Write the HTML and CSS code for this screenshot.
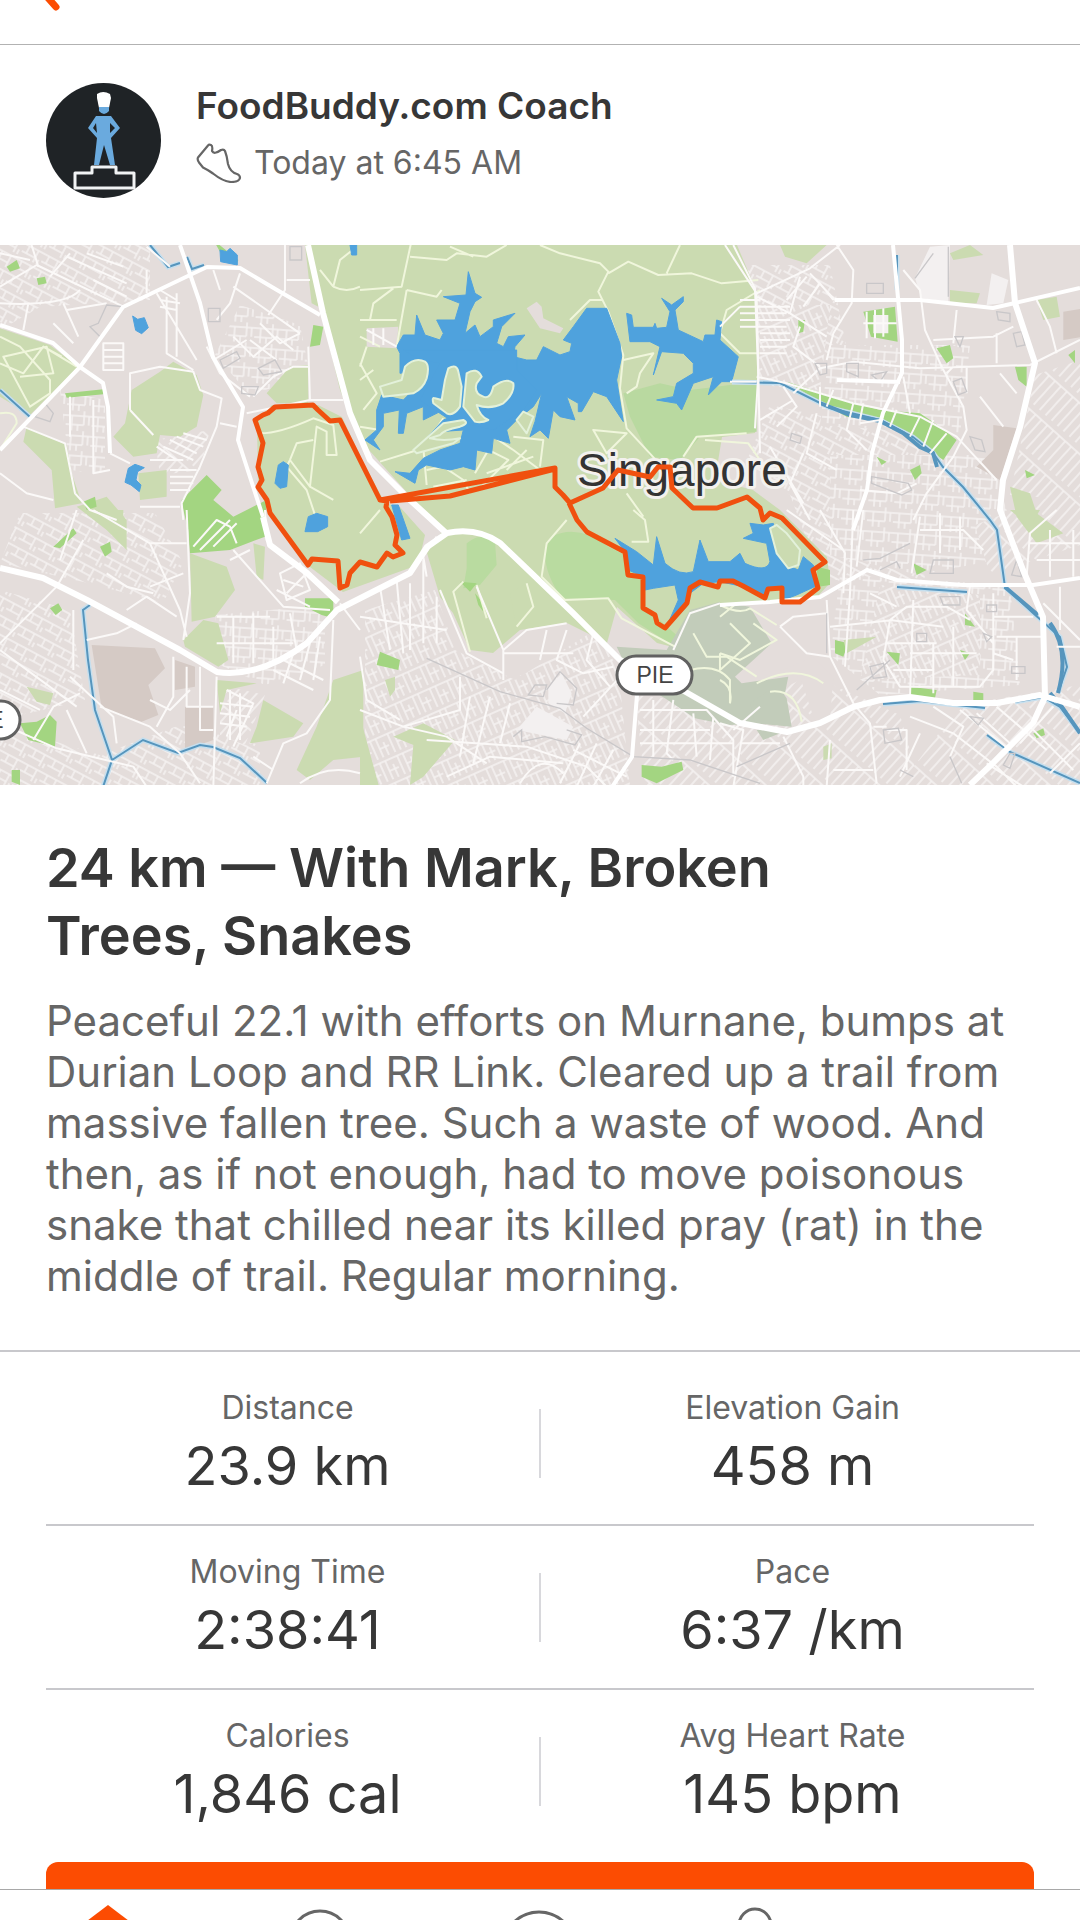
FILE: index.html
```html
<!DOCTYPE html>
<html lang="en">
<head>
<meta charset="utf-8">
<meta name="viewport" content="width=device-width, initial-scale=1">
<title>Activity</title>
<link rel="stylesheet" href="styles.css">
</head>
<body>
<div class="app">
  <header class="topbar">
    <button class="back" type="button" aria-label="Back">
      <svg width="32" height="44" viewBox="0 0 32 44"><path d="M23-20 5-10 20 7" class="back-line"/></svg>
    </button>
  </header>

  <main class="content">
    <section class="author">
      <svg class="avatar" viewBox="0 0 115 115" role="img" aria-label="FoodBuddy.com Coach">
        <circle cx="57.500" cy="57.500" r="57.500" fill="#1f2326"/>
        <path d="M51 11q6-4 13 0l1 4-2 10H53l-2-10z" fill="#fff"/>
        <path d="M53 24h10v4q-5 6-10 0z" fill="#6aaade"/>
        <path d="M50 33h15l9 12-9 10 4 27h-5l-6-20-5 20h-5l3-27-9-10zM50 40l-3 5 4 5zm14 0v10l5-5z" fill="#6aaade" fill-rule="evenodd"/>
        <path d="M29 90h17v-6h24v6h18v15H29z" fill="none" stroke="#f1f3f4" stroke-width="3" stroke-linejoin="round"/>
      </svg>
      <div class="author-text">
        <h2 class="name">FoodBuddy.com Coach</h2>
        <p class="when">
          <svg class="shoe" width="46" height="40" viewBox="0 0 46 40" aria-hidden="true"><path d="M12 2.500 2 14.500q-1 2 1 5l4 5q6 3 10 6 10 8 18 8.500 8 0 9-4 0-3-3-4-7-2-9-10-1-8-3-13-1-2-4-1-7 5-9 1 1-5-1-6-2-1-3 .5z" fill="none" stroke="#666" stroke-width="2.200" stroke-linejoin="round"/></svg>
          <span>Today at 6:45 AM</span>
        </p>
      </div>
    </section>

    <svg class="map" viewBox="0 0 1080 540" preserveAspectRatio="xMidYMid slice" role="img" aria-label="Route map">
      <defs>
        <pattern id="streets-a" width="22" height="17" patternUnits="userSpaceOnUse" patternTransform="rotate(28)"><path class="ground" d="M0 0h22v17H0z"/><path class="street" d="M0 4h22M0 12h15M5 4v8M15 4v13M19 12v5"/></pattern>
        <pattern id="streets-b" width="19" height="24" patternUnits="userSpaceOnUse" patternTransform="rotate(-24)"><path class="ground" d="M0 0h19v24H0z"/><path class="street" d="M0 4h19M3 4v20M9 4v20M15 10v14M9 15h10"/></pattern>
        <pattern id="streets-c" width="26" height="20" patternUnits="userSpaceOnUse" patternTransform="rotate(4)"><path class="ground" d="M0 0h26v20H0z"/><path class="street" d="M0 5h26M0 14h18M6 5v15M18 0v14M12 14v6M23 5v9"/></pattern>
        <pattern id="streets-d" width="8" height="38" patternUnits="userSpaceOnUse" patternTransform="rotate(42)"><path class="ground" d="M0 0h8v38H0z"/><path class="street" d="M3 3v32M0 3h8"/></pattern>
      </defs>
      <path class="ground" d="M0 0h1080v540H0z"/>

      <!-- street texture of the built-up districts -->
      <path fill="url(#streets-a)" d="M0 0h150v55L40 62 0 85zM20 268h135l28 50-20 40-75-20-88-20zM0 345l70 20 15 90-85 20zM0 480l100 30 80-30 80 20v40H0zM770 160l140 30 30 50-20 120-100-30-30-80-45-30zM740 20h90l20 100-80-20z"/>
      <path fill="url(#streets-c)" d="M240 60l60 20 10 50-60 20-35-40zM215 370l110-10v60l-60 20-45-20zM60 145l45 10v75l-35-5zM840 330l170 10 10 100-140 10-50-40zM830 100h140l-10 90-140-10zM830 210h160l30 100-100 20-90-20z"/>
      <path fill="url(#streets-b)" d="M365 365l70-20 20 60 60 30 80-50 30 50-30 60v50H365zM755 60l75 0-10 85-62-5zM880 340l100 10v80l-120 5zM370 460l60-20 90 50v50H380zM520 430l100 10 10 100H500z"/>
      <path fill="url(#streets-d)" d="M1035 130l45-15v140l-70-5zM960 460l120-20v100H900zM155 195l55-10-10 40-40 5zM220 440l45 10-20 50-25-10zM730 470l80-40 90 40 20 70H720zM975 280l105-40v60l-90 30zM635 450l90 10 10 80h-90z"/>

      <!-- industrial and military land -->
      <g transform="translate(0 265) scale(.3333)"><path fill="#d5cac5" d="M275 405l190 10 30 60-50 50 30 90-50 20-120-40zM555 590h85v100l-85 30zM525 450l60 20v60l-60 10z"/></g>
      <g transform="translate(720 -5) scale(.3333)"><path fill="#d5cac5" d="M820 555l70 10-50 155-70-40 50-50zM1030 215l60-10v85l-60 10z"/></g>

      <!-- woodland and parks -->
      <path class="wood" d="M310 0H737L758 50V135L755 188 722 192 715 235 753 245 780 265 827 312 830 338 817 352 720 358 693 368 673 402 657 398 617 362 607 398 567 378 520 385 493 408 470 405 453 368 440 352 427 308 443 285 420 262 360 195 340 145 328 95z"/>
      <path class="wood" d="M257 175 272 160H318L342 172 362 215 385 258 400 262 425 290 418 320 343 347 310 322 268 265 258 242z"/>
      <g transform="translate(0 -5) scale(.3333)">
        <path class="wood" d="M0 265l150 50 85 65-115 115-30 30-90-55zM80 560l120 55 15 85 30 90-80 15-10-115-85-85zM395 450l85-55 40-30 70 40 20 60-20 95-50 30-60-5-10 55-70 10-60-60 35-40zM415 700l85-10v80l-80 10zM800 460l70-80 55-5v115h-95zM915 15h20l20 185-20-10zM230 800l90-30 60 70v90l-60-60z"/>
        <path class="park" d="M20 80l30-20 10 25-30 10zM110 115l25-5 5 20-25 5zM195 460l115-12v15l-110 10zM640 0l75 60-5 15-50-40zM940 255l30 5-10 55-30 5zM250 785l35-15 5 30-30 10z"/>
      </g>
      <g transform="translate(360 -5) scale(.3333)">
        <path fill="#b9d9a0" d="M790 460l110-30 90 20 120-15h80v140l-170 15-60 70-90-10-60-120z"/>
        <path class="ground" d="M20 265l95-5-5 65-90-5zM500 205l30-20 15 15 5 35 60 30-10 15-60-15z"/>
      </g>
      <g transform="translate(720 -5) scale(.3333)">
        <path class="wood" d="M180 15h140l-60 55-65-20zM950 180l60-10 10 60-50 10zM690 150l90 10-10 30h-80zM690 40l60-25 40 30-90 15zM870 740l60 20 20 60 80 60-80 30-60-80z"/>
        <path class="park" d="M200 425l140 45 140 40 120 10 60 40 50 40-40 60-30-20-60-50-100-50-100-10-90-50zM430 215l95-15 8 105-80-15zM235 240h20l-5 35-15 5zM650 325l40-10 10 40-20 15zM885 380h35v60l-25-20zM1045 345l20-15v40zM570 690l30-15 5 25-20 20zM915 690l30 15-25 10zM470 650l30 15-15 10z"/>
        <path class="plaza" d="M630 20l60-5-5 170-80-10-20-60zM815 100l50 20-15 70-50 5zM460 225h45v55h-45z"/>
      </g>
      <g transform="translate(0 265) scale(.3333)">
        <path class="park" d="M550 0l-5-30 75-75 45 45-25 30 60 50 100-50-5 110-105 40-120 10-5-70zM60 640l50-5 40-20 20 20-5 75-80-20zM300 110l30-15 5 30-20 15zM150 295l25-15 12 20-20 15zM915 265h85v60l-35-10-50-25zM160 110l60-55 10 15-50 45zM35 780h25v45l-25-10z"/>
        <path class="wood" d="M570 130l110 40 25 70-60 80-70 15zM550 390l60-60 45 10 30 110-30 20-100-60zM790 570l120 70-30 40-130 20 20-50zM1000 510l90-30v260l-90 10-70 60-40-30 60-130zM650 510l120 10-90 20-20 70zM290 0h80v40l-20 30zM80 530l80 20-10 35-40-10zM760 100l35 10-5 100-20-10z"/>
      </g>
      <g transform="translate(360 265) scale(.3333)">
        <path fill="#b9dba0" d="M575 80q80-40 170 30l40 20 60 65 10 95 100 90-10 30-110-70-70-70-160-5q-80-120-30-185zM320 100q50-40 85-5l5 70-50 60-50 10 10-60z"/>
        <path class="wood" d="M100 680l90-40 95 50-95 110-40 25 10-120zM0 620l60 220H0zM75 510l30-10v40l-15 20zM450 250l50-30 20 80-50 60z"/>
        <path class="park" d="M60 425l60 25-5 30-65-15zM345 250l25 30v25l-15-20zM300 215l50 5-20 25zM845 765l60 5 60-15 5 25-80 40-45-20z"/>
        <path class="plaza" d="M530 590l110 60-20 40-150-30zM565 530l40-40 30 60-20 60-50-30z"/>
        <path class="cemetery" d="M770 410l150 10 70-120 90-25 90 15 65 110-110 100 20 20 140-20-10 50-50 10v80l-120 5-100-20-90-60-100-60z"/>
      </g>
      <g transform="translate(720 265) scale(.3333)">
        <path class="ground" d="M120 510l160-70 60 60-10 130-40 20-50-150-110-20z"/>
        <path class="cemetery" d="M140 545q40-20 60 20l15 85-110-10-15-60zM110 660l60-5 10 15-50 20z"/>
        <path class="park" d="M290 170l40 10v45l-35 5zM580 160l40 20-30 15zM735 310l30 40-30-5zM500 425l40 5-5 35zM720 420l30 10-15 20zM570 530l80 10-5 25-75-5zM760 545l30 5v25h-30zM940 670l30-15 5 20-25 10zM345 390l40 10-15 40-25-10z"/>
        <path class="wood" d="M870 0h90l-30 50zM370 390l100-10-90 50zM310 710l25-10v45l-25 5zM0 230l130 40 170-20-60 30H0z"/>
      </g>

      <!-- trails inside the woods -->
      <g class="trail" transform="translate(0 -5) scale(.3333)"><path d="M0 290l60 30 90 100 0 40-60 40-80-150 130-30 20 80-100 10M0 370l70 30 60-80 100 60M130 320l55 30M0 520q50-10 50 30L0 630M780 580q60 0 160-45l60 20 10 90h-30v-70l-30-15-20 180M870 660l20-50 50-10M870 660l60 80 70 40M870 660l-10 20 60 70 30 90M1000 140l20-80 50-40M1000 140q40 20 80 0M960 90l40 50"/></g>
      <g class="trail" transform="translate(360 -5) scale(.3333)"><path d="M155 0l-30 140-125 10M150 50l110 10 30-20 90 10 60-35M270 20l70 30M140 150l90 20 15-20M30 240l10-50 60-45M140 150l-30 170M0 240h110M540 15l60 25 120 30 25 25-30 60 30 60 45 130-10 100 20 120 120 130M745 100l60-35 90 40 100-5 90 30 110-10M920 100l40-85M790 360l90-20-40 60-10 40-30 20M1200 150l-100 60-20 70 60 60h60M630 240l60-60h40M0 370l50 90-40 50M60 665l130-40 10 110M190 625l60-90M400 590l60 40 80 60M345 700l40-70 60 30-80 80M460 590l90 10-10 80M440 690l60-60M700 570l100 10-60 60zM970 650l40-60 150-10M1035 600l130 10 35 50M800 760l50 70M0 290l60 30M20 320l-20 60M0 420l40-30M0 560l60 10M200 690l50-10 60 40 20 40M380 700l140-50M220 740l100-20"/></g>
      <g class="trail" transform="translate(360 265) scale(.3333)"><path d="M620 30l-60 70-15 100 70 70 130-5 40 60 160 85M820 0l35 30 10 65h-50M0 70l60-70M500 220l20 70-50 60M310 215l-30 30 50 180M350 225l30 100M1000 370l40 70 60 0 90 60M990 480q80-20 120 30v70M1080 430l0 50 90-80-60-60"/></g>
      <g class="trail" transform="translate(720 265) scale(.3333)"><path d="M0 285q60 30 90 10l80 50M0 430l60 20 110-60-70-50M0 510q40 20 30 70M110 520q120-60 200 0M150 545q80-10 95 90M0 320l50-40"/></g>

      <!-- reservoirs, lakes and canals -->
      <g class="water" transform="translate(360 -5) scale(.3333)">
        <path d="M110 320L130 285 165 285 170 225 195 285 240 300 250 280 230 240 285 240 300 190 250 170 318 165 325 95 345 160 365 172 345 185 330 215 315 280 345 255 360 290 400 260 400 240 465 220 425 260 410 310 430 320 445 290 495 285 465 320 460 350 500 360 530 360 550 320 600 345 630 335 635 310 610 300 640 260 680 205 740 205 780 310 785 350 770 420 790 545 740 470 700 455 665 515 655 515 655 490 620 470 645 540 600 530 580 510 565 595 540 570 510 590 525 545 545 460 520 500 470 540 440 570 450 610 400 595 395 640 350 630 345 690 310 680 270 690 200 675 175 690 165 730 105 695 150 700 190 655 240 630 300 610 310 570 240 575 195 600 250 540 300 520 260 505 190 540 190 500 140 520 130 580 115 580 118 510 70 520 70 560 40 600 60 630 15 600 50 570 50 510 65 465 130 480 180 430 200 385 120 400 120 340z"/>
        <path d="M800 220L815 225 820 262 880 262 885 250 890 265 920 262 930 215 905 175 935 195 970 170 970 185 945 210 955 270 1030 305 1035 285 1065 285 1070 240 1085 245 1080 300 1135 350 1115 425 1085 425 1045 465 1060 410 1000 430 965 510 950 490 890 480 940 470 950 430 1000 400 1000 370 970 340 905 335 880 405 900 320 870 305 810 305z"/>
        <path d="M95 795h20l35 100-25 5zM-30 15h20v30h-15z"/>
        <path d="M130 330h340v60l60 60-40 60-90 60-130-30-90-60 60-110-60-10z"/>
      </g>
      <g class="island" transform="translate(360 -5) scale(.3333)"><path d="M60 440l65-20 10-40q30-30 60-15 15 10 5 50-10 30-40 45l-90 10zM265 385q25-15 30 10l10 45-5 60q-20 30-40 20l-40-30q-5-20 5-15l20 5 10-60zM320 400q30-20 45 10l-15 20q-10 30 20 40 20 10 30-30 40-30 60-10 5 30-30 60-40 20-80 5 10 35 35 45-20 10-40 5l-35-45zM470 540l20-25 30 15-20 50zM160 630l90-80 60-10q20 10-10 20-50 10-60 25l-30 10q40 10 90 0l-20 15-110 30z"/></g>
      <path class="water" transform="translate(360 265) scale(.3333)" d="M765 85L830 125 880 165 890 80 915 160Q960 200 1000 185L1020 90 1045 155 1110 155 1140 130 1155 160Q1220 190 1230 155L1220 100 1150 85 1180 70 1170 40 1210 45 1240 40 1245 60 1260 130 1280 165 1315 180 1330 140 1360 165 1375 225 1310 255 1270 270 1265 235 1220 240 1210 265 1150 230 1080 215 1030 220 990 250 980 290 920 350 955 270 945 225 880 235 855 240 850 200 805 180 795 125z"/>
      <path class="island" transform="translate(720 265) scale(.3333)" d="M150 55l20-10 30 25 40 50-5 45-30 10-35-45z"/>
      <g class="water" transform="translate(0 -5) scale(.3333)"><path d="M398 228l15 10 20-5 12 30-20 18-18-10zM660 30l20 5 10-10 22 20v30l-50-10zM835 675l15-10 15 10-5 65-20 5-15-15zM385 685l20-12 28 10-20 12-5 25 15 15-5 20-25-20-18-8z"/></g>
      <path class="water" transform="translate(0 265) scale(.3333)" d="M915 65l10-45 25-10 33 10v30l-30 15z"/>
      <g class="canal-edge"><use href="#canals"/></g>
      <g class="canal"><g id="canals">
        <path d="M150 0L168 22 180 18M187 12L192 24 204 20M0 145L30 172M897 10v35M732 137L780 138 830 163 880 175 913 192 933 208 943 222 963 242 990 275 997 285 1005 342 1033 368 1060 392 1067 422 1058 448M883 459L920 456 985 463M1015 457L1043 452 1060 462 1080 488M897 342L967 347M987 490L1010 507 1080 538M90 360L83 365 88 415 95 465 112 515 103 542M112 515L143 495 178 508 200 500 213 502 240 513 267 538"/>
      </g></g>
      <path class="river" d="M820 158L850 170 880 176 903 188 920 202 933 208 937 222M1005 342L1038 370M1050 378Q1070 405 1058 448M1050 448L1062 462 1080 488"/>

      <!-- secondary streets -->
      <g class="road" transform="translate(0 -5) scale(.3333)"><path d="M0 140l110-65 260 125M90 0l25 80M0 190q200 10 240-40M190 190l45 100M70 270l15-80M200 210l120-20M855 15v135l-50 75M925 320l5 160-190 40M930 480h100M390 510V400l90-20 100 15 20 55 65 25-15 85-50 120-55 110 5 50M390 510l70 75M70 560l125 50 30 150 45 50 80 30M700 140l200 140M640 90l20 60M500 250v90l80 50M0 700l80 60 80 20M440 90v70M160 250l60 60M470 160l120 200M720 100l-30 90-40 50M860 120h70M640 360l100-60M760 470l60-60 60-30h45M620 320l40 80 90 70M330 640l60 30M210 470v120M280 480v220l50-10M450 660h100M660 550l50 10M420 800h120M310 310h60v80h-60zM310 330h60M310 350h60M310 370h60M480 150l50 30M480 180l60 10M480 200l50 10M500 170v80M530 160v190M490 620l90 40M510 600l80 40M530 590l80 30M550 580l70 20M510 690h80M510 710h70M510 730h70M510 750h60M470 620l60 40M700 290l60 60 70-60 50 40M750 300l80 60M780 250l60 60 60-30M440 20l70 60M260 40l110 40M200 50l180 80M150 110l60-70M280 120l100 50M0 40l90 20"/></g>
      <g class="road" transform="translate(360 -5) scale(.3333)"><path d="M1120 15l65 130 10 260-10 160M1110 425h80M20 270l90 50M40 265v50M70 265v50M1140 180h60M1140 200h60M1140 220h60M1140 240h60M1140 260h60"/></g>
      <g class="road" transform="translate(720 -5) scale(.3333)"><path d="M15 15l95 145 5 240 5 240M110 160l160-75 90-70M270 100l75 80M350 15l50 75-5 100-55 90-20 80M550 90l50 60 15 120 50 110 65 120 10 70-40 80-80 110-40 80M220 460l80-75 100-20 200 20 330-10 150-75M110 410l90 20 200 60 200 40 110 60 120 130M950 180l40 80 20 80M710 210l-10 100M640 300l180-10 60-30M830 280v90M290 520l-30 120 90 50M550 410l20 110M190 440l40 60-60 60M120 540l100-60M400 490l-20 80 60 60M480 540l-60 10M740 380v80M680 400l20-20M110 170l100 50 110 70M210 220l30-110M300 380l-80-60 20-60M0 260l60-60M840 400l50 60M780 470l70 90M420 750l110 10 60-30M250 640l-40 90 60 110M150 620l100 170M120 200h90M120 220h80M120 240h90M120 260h80M120 280h90M120 300h90M120 320h80M120 340h80M440 215v80M465 210v85M490 205v85M430 250h100M300 440v60M340 450l-20 50M430 490l-10 50M530 510l-20 50M600 530l-30 60M640 540l-30 80M680 580l-50 60M250 200l50-70 40 50M200 180l60-70"/></g>
      <g class="road" transform="translate(0 265) scale(.3333)"><path d="M795 0l5 90 120 100 90 80M1020 280l60 80M1000 330l-10 240-70 100-70 30-50 120M650 500l-10 330M560 0l10 250-20 140M700 120l150 170 140 10M280 0l170 100 90 200 20 80M0 400l170-170 80-140M0 640l170 75 230 55 40 60M520 440v120l-50 90M300 590l150 60 90 80 60 90M210 500l130 120 10 80M0 420l230 170M260 390l90-20 60-30M560 470v120h80M450 570l60 30 60-60M600 470v190h40M320 190l60 40 80 20M380 300l60-40 90 60M690 150l60-30M830 240l100 50M650 320h160M700 320v140M760 310v150M820 350v100M870 310l20 110M650 400h230M220 300v180M200 600l60 130M100 690l60-100 80-40M0 540l120 60M230 0l-50 150M450 100l110 0M450 230l100-40M680 540l80 40-60 130M710 600l-30 80M760 740l60 40M900 820q80-60 180-30M580 110l70-80 40 20 20 50M600 120l90-90M640 110l70-70M660 580l100 10M660 610l90 10M660 640l80 10M690 540v150M720 550v140M840 190l60-30 30 80-70 30zM850 210l60 20M860 250l60-60M820 480l120 60M850 450l120 60M880 430l-30 90M930 400l-30 110M960 380l-20 130"/></g>
      <g class="road" transform="translate(360 265) scale(.3333)"><path d="M190 150v250M200 200l-10-60 40-60M240 240l80 190 110 60M430 510v-90l70-60 120-20M350 230l80 190M0 600l130 50 170-50V500M130 650l130 30 120 80M0 440l20 130 100 60M940 420l50-110 90-30M60 230l30 190M110 210l20 220M150 220v200M230 260v140M0 320l260 40M430 430h210M560 360l-20 90M620 360l-30 90 80 40 90-20M700 370l-20 80 70 80M330 560l-30 180M390 560l-50 200M450 580l-30 120M200 690l300 20 180 60 60 60M260 800l130-60 220 20M480 820q60-100 130-30M660 700l-60 120M710 700l-60 130M760 720l-60 110M640 720l160 80M670 620l120-130 40 70M880 570v170M940 570l-20 160 20 20M840 600h200l80 90v110M1000 610l10 130M1060 620l-10 130M840 660h210M840 700h280M1200 590l-80 70"/></g>
      <g class="road" transform="translate(720 265) scale(.3333)"><path d="M320 270l10 170 70 140 50 60 20 180M400 0l-10 250-15 220M430 0l-20 170M300 0l75 130-5 120M600 20l-25 170M750 230l-10 70 80 100v80l-40 50H540l-50-80 20-120 50-40h120l70 40M580 270l-10 290M920 200l10-130 80-70M330 350l190-20M180 350l80 80 70 10M180 350l40-30 100-10M450 250l80 40M510 330l160 20M500 400h150M520 480h120M640 400v150M700 350v180M570 430h200M200 0l170 120M930 100h150M950 150h130M990 60v140M1060 60v140M600 60h130l60 60M660 10v120M720 20v100M820 250v180l60 20M820 320h120M830 380h140M890 380v130M970 280l110 110M1020 230v130M1010 410h70M570 620l130 50 130 100 60 60M640 590l90 60-40 90M720 600l150 120M830 590l150 130M500 660h60v120M460 650h40M0 640l70 20-30 170M60 700h120M190 680l60 120 0 30M330 690l-10 140M340 780h120M600 670l-60 130M1000 590l-100 110M1080 700l-90 90M930 650l130 130M800 760l110 70M870 700l-100-90"/></g>

      <!-- building outlines and the rail line -->
      <g class="block" transform="translate(0 -5) scale(.3333)"><path d="M320 195l45 5-60 95-35-35 25-10zM625 205h35v40h-35zM660 360l50-25 10 20-50 30zM775 385l50-25 20 35-55 10zM105 530l30-40 25 30-10 25zM725 440l50 0-10 25-40-5zM870 20h35v40h-35z"/></g>
      <g class="block" transform="translate(720 -5) scale(.3333)"><path d="M440 130h50v30h-50zM285 370h35v30l-20 5zM380 370h35v40l-35-15zM455 405l45-10-20 30zM700 425l25-10 15 40-25 10zM705 290h25l-10 30zM880 280l25-5 10 40-25 5zM750 590l35 10 10 35-30-5zM215 580l30 10-5 20-30-10zM455 710l110 20 10 20-30 15-90-35zM830 215l40 5v25l-35-5zM585 115l55-75M685 20v150"/></g>
      <g class="block" transform="translate(360 265) scale(.3333)"><path d="M460 680l25-20 0 35 70-15 90 25 20-30-45-15M525 525h35l-10 35-45-5zM560 540l40-55 50 50-10 50-50-5M200 445L420 545l180 50 80 60 140 85 170 10 210 70"/></g>
      <g class="block" transform="translate(720 265) scale(.3333)"><path d="M490 660l45-5 10 35-50 10zM450 470l40-10 10 40-40 5zM590 370h30v25h-30zM800 285h30v20h-30zM790 370l25 10-15 15zM875 470h40v20h-40zM750 620l40 5-15 20zM410 540l100-90M430 150l50-5 90-45M480 180l50-25 10 20M640 150h60v40h-70zM870 730h15l-15 45-20-10zM320 310v120M890 150l15 50-30-5zM690 740l35 80M540 780l40 20M50 770l160-70M660 260h60v25h-50z"/></g>

      <!-- main roads and expressways -->
      <g class="avenue">
        <path d="M0 205L80 122 123 62 190 30 207 22 240 23 277 45 320 70M0 80L53 98 80 122 103 138 108 162 110 208M180 0L200 58 213 112 243 162 238 195 263 272"/>
        <path d="M835 55L920 55 993 63 1015 58 1080 43M893 0L902 95 902 128 883 168 872 208 867 245 853 285M837 135L900 137"/>
        <path d="M720 360L770 357 820 352 867 325 897 335 963 340 1033 340 1080 333M637 450L632 512 610 545"/>
      </g>
      <g class="expressway">
        <path d="M308 0L323 68 350 168 370 215 410 255 445 287M0 323L43 333 87 355 180 405 217 427Q260 433 307 398L337 365 410 328 427 302 447 288Q477 282 500 298L573 368 620 415 677 442 740 478 787 487 820 478 853 462 880 455 910 452 953 458 997 458 1040 450 1080 462"/>
        <path d="M1010 0L1015 58 1035 118 1020 182 1003 235 1000 265 1023 325 1043 372 1045 452 1033 478 993 518 970 540M263 272L270 300 307 328 338 357"/>
      </g>

      <text class="city" x="577" y="241">Singapore</text>
      <path class="route" d="M380 255L340 175 330 176 318 165 313 160 275 162 268 168 263 170 255 175 263 198 258 222 262 235 258 242 267 255 270 268 308 320 312 314 338 316 340 343 347 340 350 328 360 317 377 322 387 308 393 312 403 308 395 300 397 290 392 272 386 262 387 256 380 255 555 223 555 242 563 250 570 258 603 243 618 225 650 232 658 222 670 222 672 243 693 263 717 263 747 252 760 263 763 275 770 268 782 273 825 317 813 325 818 343 800 357 782 357 782 343 768 344 765 353 743 341 733 336 720 336 718 342 700 337 690 343 687 358 665 383 657 378 655 370 643 363 643 332 628 330 625 307 587 287 577 275 569 258M390 256L450 251 493 240 555 224"/>
      <rect class="shield" x="617" y="411" width="75" height="38" rx="19"/>
      <text class="shield-text" x="655" y="438">PIE</text>
      <rect class="shield" x="-55" y="456" width="75" height="38" rx="19"/>
      <text class="shield-text" x="-4" y="483">E</text>
    </svg>

    <section class="summary">
      <h1 class="title">24 km — With Mark, Broken Trees, Snakes</h1>
      <p class="description">Peaceful 22.1 with efforts on Murnane, bumps at Durian Loop and RR Link. Cleared up a trail from massive fallen tree. Such a waste of wood. And then, as if not enough, had to move poisonous snake that chilled near its killed pray (rat) in the middle of trail. Regular morning.</p>
    </section>

    <dl class="stats">
      <div class="row">
        <div class="stat"><dt>Distance</dt><dd>23.9 km</dd></div>
        <div class="stat"><dt>Elevation Gain</dt><dd>458 m</dd></div>
      </div>
      <div class="row">
        <div class="stat"><dt>Moving Time</dt><dd>2:38:41</dd></div>
        <div class="stat"><dt>Pace</dt><dd>6:37 /km</dd></div>
      </div>
      <div class="row">
        <div class="stat"><dt>Calories</dt><dd>1,846 cal</dd></div>
        <div class="stat"><dt>Avg Heart Rate</dt><dd>145 bpm</dd></div>
      </div>
    </dl>
    <div class="action"><button class="primary" type="button" aria-label="View analysis"></button></div>
  </main>

  <nav class="tabs" aria-label="Main">
    <a href="#home" aria-label="Home"><svg width="80" height="30" viewBox="0 0 80 30"><path d="M40 15 15 34h50z" fill="#fc4c02"/></svg></a>
    <a href="#explore" aria-label="Explore"><svg width="80" height="30" viewBox="0 0 80 30"><circle cx="36" cy="50" r="29"/></svg></a>
    <a href="#record" aria-label="Record"><svg width="80" height="30" viewBox="0 0 80 30"><circle cx="39" cy="58" r="36"/></svg></a>
    <a href="#profile" aria-label="Profile"><svg width="80" height="30" viewBox="0 0 80 30"><circle cx="39" cy="35" r="16"/></svg></a>
    <a href="#more" aria-label="More"></a>
  </nav>
</div>
</body>
</html>
```
FILE: styles.css
```css
* { box-sizing: border-box; }

body {
  margin: 0;
  background: #fff;
  color: #373737;
  font-family: Inter, "Liberation Sans", sans-serif;
}

h1, h2, p, dl, dd { margin: 0; }

.app {
  display: flex;
  flex-direction: column;
  min-height: 100vh;
}

/* top bar */
.topbar {
  height: 45px;
  padding-left: 36px;
  border-bottom: 1px solid #b2b2b2;
  overflow: hidden;
}
.back {
  padding: 0;
  border: 0;
  background: none;
}
.back svg { display: block; }
.back-line {
  fill: none;
  stroke: #fc4c02;
  stroke-width: 7;
  stroke-linecap: round;
}

/* author */
.author {
  display: flex;
  gap: 35px;
  height: 200px;
  padding: 38px 46px 0;
}
.avatar {
  flex: none;
  width: 115px;
  height: 115px;
}
.name {
  font-size: 37px;
  font-weight: 600;
  line-height: 46px;
}
.when {
  display: flex;
  align-items: center;
  gap: 12px;
  color: #666;
  font-size: 32px;
  line-height: 40px;
  margin-top: 14px;
}
.shoe { flex: none; }

/* map */
.map {
  display: block;
  width: 100%;
  aspect-ratio: 2 / 1;
}
.ground { fill: #e4dddb; }
.street { fill: none; stroke: #f6f3f2; stroke-width: 1.5; }
.plaza { fill: #f3f0f0; }
.wood { fill: #cbdbb1; }
.park { fill: #a3d581; }
.cemetery { fill: #c2ccba; }
.water { fill: #4fa2dd; stroke: #4fa2dd; stroke-width: 3; stroke-linejoin: round; }
.trail { fill: none; stroke: #f0f6dc; stroke-width: 6; stroke-linejoin: round; }
.island { fill: #cbdbb1; stroke: #e3f1da; stroke-width: 6; stroke-linejoin: round; }
.canal-edge { fill: none; stroke: #c6dfee; stroke-width: 5; }
.canal { fill: none; stroke: #5695bd; stroke-width: 2; }
.river { fill: none; stroke: #5695bd; stroke-width: 4; }
.road { fill: none; stroke: #fbf9f8; stroke-width: 6; stroke-linejoin: round; }
.block { fill: none; stroke: #c9c7c9; stroke-width: 4; }
.avenue { fill: none; stroke: #fff; stroke-width: 4; stroke-linejoin: round; }
.expressway { fill: none; stroke: #fff; stroke-width: 6; stroke-linejoin: round; }
.route { fill: none; stroke: #f0500f; stroke-width: 5; stroke-linejoin: round; }
.city {
  fill: #333;
  stroke: #f3f1ee;
  stroke-width: 6;
  stroke-linejoin: round;
  paint-order: stroke;
  font: 46px "Liberation Sans", sans-serif;
}
.shield { fill: #fff; stroke: #616161; stroke-width: 3; }
.shield-text {
  fill: #444;
  font: 23px "Liberation Sans", sans-serif;
  text-anchor: middle;
}

/* title and description */
.summary { padding: 49px 46px 49px; }
.title {
  max-width: 860px;
  font-size: 54px;
  font-weight: 600;
  line-height: 68px;
}
.description {
  margin-top: 25px;
  color: #666;
  font-size: 42px;
  line-height: 51px;
}

/* statistics */
.stats {
  border-top: 2px solid #c8c8cc;
  padding: 0 46px;
}
.row {
  display: grid;
  grid-template-columns: 1fr 1fr;
  gap: 22px;
  padding: 28px 0 34px;
  border-bottom: 2px solid #c8c8cc;
  background: linear-gradient(#d8d8dc, #d8d8dc) 50% 47px / 2px 69px no-repeat;
}
.row:first-child {
  padding-top: 38px;
  background-position-y: 57px;
}
.row:last-child { border-bottom: 0; }
.stat {
  text-align: center;
  height: 100px;
}
.stat dt {
  color: #666;
  font-size: 32px;
  line-height: 36px;
}
.stat dd {
  font-size: 54px;
  line-height: 64px;
  margin-top: 8px;
}

/* call to action */
.action { padding: 0 46px; margin-top: 10px; }
.primary {
  display: block;
  width: 100%;
  height: 27px;
  padding: 0;
  border: 0;
  border-radius: 12px 12px 0 0;
  background: #fc4c02;
}

/* tab bar */
.tabs {
  display: grid;
  grid-template-columns: repeat(5, 1fr);
  height: 31px;
  border-top: 1px solid #a8a8a8;
  overflow: hidden;
}
.tabs a { display: flex; justify-content: center; }
.tabs svg { fill: none; stroke: #666; stroke-width: 3; }
.tabs path { stroke: none; }
```
